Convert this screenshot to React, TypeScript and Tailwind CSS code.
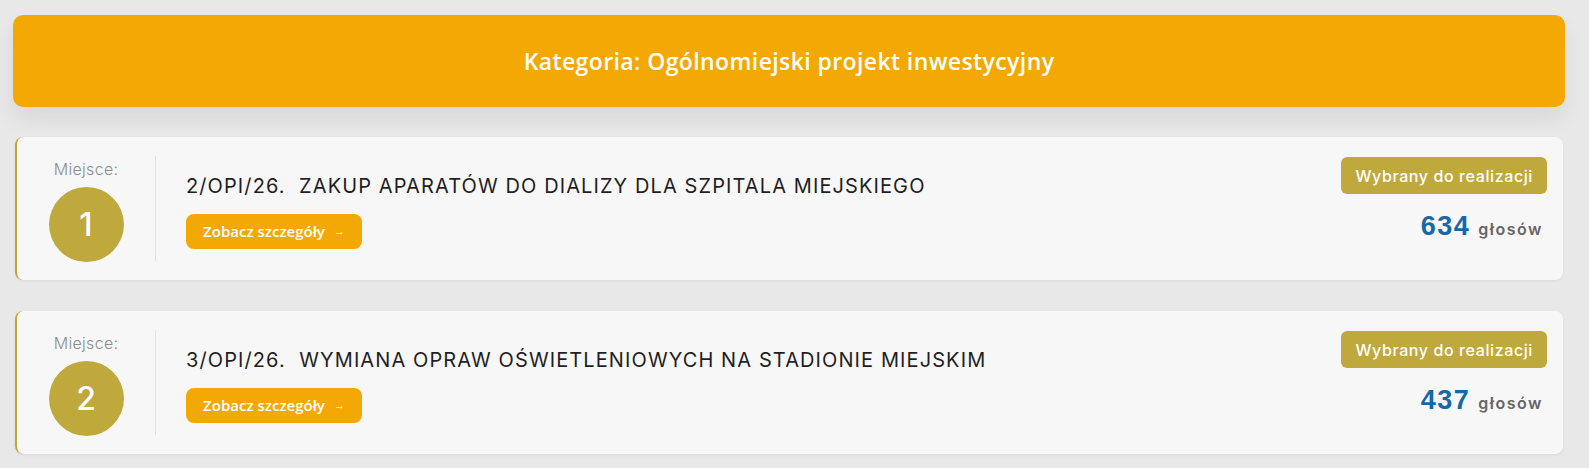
import React from 'react';

interface Project {
  place: number;
  code: string;
  title: string;
  votes: number;
}

const projects: Project[] = [
  { place: 1, code: '2/OPI/26.', title: 'ZAKUP APARATÓW DO DIALIZY DLA SZPITALA MIEJSKIEGO', votes: 634 },
  { place: 2, code: '3/OPI/26.', title: 'WYMIANA OPRAW OŚWIETLENIOWYCH NA STADIONIE MIEJSKIM', votes: 437 },
];

const headFont = { fontFamily: '"Open Sans", "Liberation Sans", sans-serif' };
const bodyFont = { fontFamily: 'Inter, "Noto Sans", sans-serif' };

const ProjectCard: React.FC<{ project: Project }> = ({ project }) => (
  <div className="mx-[2px] flex h-[143px] items-stretch rounded-lg border-l-2 border-[#bfa83a] bg-[#f7f7f7] shadow-[0_1px_3px_rgba(0,0,0,0.06)]">
    {/* Place */}
    <div className="flex w-[138px] flex-col items-center pt-[20px]" style={bodyFont}>
      <span className="text-[16px] font-light tracking-[0.3px] text-[#8c8c8c]">Miejsce:</span>
      <div className="mt-[6px] flex h-[75px] w-[75px] items-center justify-center rounded-full bg-[#c0a93c] text-[32px] font-medium text-white">
        {project.place}
      </div>
    </div>
    <div className="my-[19px] w-px bg-[#e2e2e2]" />

    {/* Title */}
    <div className="flex flex-1 flex-col pl-[30px] pt-[37px]">
      <h3 className="text-[20px] font-normal leading-[24px] tracking-[1.1px] text-[#1f1f1f]" style={bodyFont}>
        {project.code}&nbsp;&nbsp;{project.title}
      </h3>
      <button
        className="mt-[16px] flex h-[35px] w-[176px] items-center justify-center gap-[9px] rounded-lg bg-[#f4a803] text-[15px] font-semibold text-white"
        style={headFont}
      >
        Zobacz szczegóły
        <span className="text-[11px]">→</span>
      </button>
    </div>

    {/* Status */}
    <div className="flex flex-col items-end pr-[16px] pt-[20px]" style={bodyFont}>
      <span className="flex h-[37px] items-center rounded-md bg-[#c0a93c] px-[14px] text-[16px] font-medium tracking-[0.6px] text-white">
        Wybrany do realizacji
      </span>
      <div className="mt-[12px] flex items-baseline gap-[8px] pr-[4px]">
        <span className="text-[27px] font-bold tracking-[1.5px] text-[#1867a6]" style={{ fontFamily: '"Liberation Sans", Arial, sans-serif' }}>
          {project.votes}
        </span>
        <span className="text-[16px] font-semibold tracking-[1.5px] text-[#666]">głosów</span>
      </div>
    </div>
  </div>
);

export default function App() {
  return (
    <div className="min-h-[468px] bg-[#e8e8e8] pl-[13px] pr-[24px] pt-[15px]">
      <div
        className="flex h-[92px] items-center justify-center rounded-[10px] bg-[#f4a803] shadow-[0_12px_22px_rgba(0,0,0,0.07)]"
        style={headFont}
      >
        <h2 className="text-[23px] font-semibold tracking-[0.4px] text-white">Kategoria: Ogólnomiejski projekt inwestycyjny</h2>
      </div>
      <div className="mt-[30px] flex flex-col gap-[31px]">
        {projects.map(p => (
          <ProjectCard key={p.place} project={p} />
        ))}
      </div>
    </div>
  );
}
